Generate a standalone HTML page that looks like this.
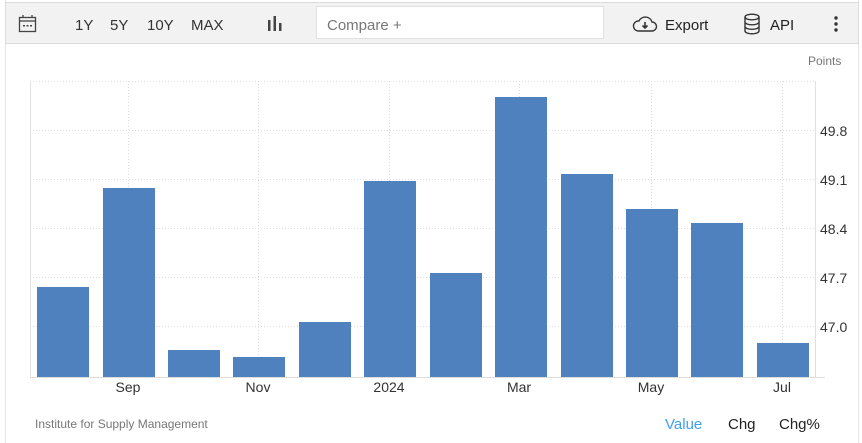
<!DOCTYPE html>
<html><head><meta charset="utf-8"><style>
*{margin:0;padding:0;box-sizing:border-box}
body{width:862px;height:443px;background:#fff;font-family:"Liberation Sans",sans-serif;position:relative;overflow:hidden}
.frame{position:absolute;left:5px;top:0;width:854px;height:443px;border-left:1px solid #e6e6e6;border-right:1px solid #e6e6e6}
.tb{position:absolute;left:5px;top:2px;width:854px;height:42px;background:#f2f2f2;border:1px solid #dcdcdc}
.t{position:absolute;font-size:15px;color:#333;top:17px}
.cmp{position:absolute;left:316px;top:6px;width:288px;height:33px;background:#fff;border:1px solid #e0e0e0;font-size:15px;color:#777;padding:10px 10px}
.lbl{position:absolute;font-size:14px;color:#333}
</style></head><body>
<div class="frame"></div>
<div class="tb"></div>
<svg style="position:absolute;left:18px;top:14px" width="20" height="20" viewBox="0 0 20 20"><rect x="1.5" y="3.5" width="16" height="14" fill="none" stroke="#444" stroke-width="1.3"/><line x1="1.5" y1="7" x2="17.5" y2="7" stroke="#444" stroke-width="1.3"/><line x1="5" y1="1" x2="5" y2="4" stroke="#444" stroke-width="1.3"/><line x1="14" y1="1" x2="14" y2="4" stroke="#444" stroke-width="1.3"/><rect x="5" y="11" width="2" height="1.5" fill="#444"/><rect x="8.5" y="11" width="2" height="1.5" fill="#444"/><rect x="12" y="11" width="2" height="1.5" fill="#444"/></svg>
<div class="t" style="left:75px">1Y</div>
<div class="t" style="left:110px">5Y</div>
<div class="t" style="left:147px">10Y</div>
<div class="t" style="left:191px">MAX</div>
<svg style="position:absolute;left:267px;top:15px" width="16" height="18"><rect x="1" y="5" width="2.5" height="11" fill="#444"/><rect x="6.5" y="1" width="2.5" height="15" fill="#444"/><rect x="12" y="8" width="2.5" height="8" fill="#444"/></svg>
<div class="cmp">Compare +</div>
<svg style="position:absolute;left:632px;top:15px" width="26" height="18" viewBox="0 0 26 18"><path d="M6 16 H20 A4.5 4.5 0 0 0 20 7 A7 7 0 0 0 7 6 A5 5 0 0 0 6 16 Z" fill="none" stroke="#333" stroke-width="1.4"/><path d="M13 7 V13 M10.5 10.5 L13 13 L15.5 10.5" fill="none" stroke="#333" stroke-width="1.6"/></svg>
<div class="t" style="left:665px;color:#222">Export</div>
<svg style="position:absolute;left:743px;top:13px" width="18" height="22" viewBox="0 0 18 22"><ellipse cx="9" cy="4" rx="7" ry="2.8" fill="none" stroke="#333" stroke-width="1.4"/><path d="M2 4 V18 A7 2.8 0 0 0 16 18 V4 M2 9 A7 2.8 0 0 0 16 9 M2 13.5 A7 2.8 0 0 0 16 13.5" fill="none" stroke="#333" stroke-width="1.4"/></svg>
<div class="t" style="left:770px;color:#222">API</div>
<svg style="position:absolute;left:834px;top:16px" width="4" height="16"><circle cx="2" cy="2" r="1.7" fill="#333"/><circle cx="2" cy="8" r="1.7" fill="#333"/><circle cx="2" cy="14" r="1.7" fill="#333"/></svg>
<div class="lbl" style="left:808px;top:54px;font-size:12px;color:#777">Points</div>
<svg style="position:absolute;left:0;top:0" width="862" height="443">
<g stroke="#ddd" stroke-dasharray="1,2" stroke-width="1">
<line x1="30" y1="81.5" x2="815" y2="81.5"/><line x1="30" y1="130.5" x2="815" y2="130.5"/><line x1="30" y1="179.5" x2="815" y2="179.5"/><line x1="30" y1="228.5" x2="815" y2="228.5"/><line x1="30" y1="277.5" x2="815" y2="277.5"/><line x1="30" y1="326.5" x2="815" y2="326.5"/>
<line x1="128.5" y1="81" x2="128.5" y2="377"/><line x1="258.5" y1="81" x2="258.5" y2="377"/><line x1="389.5" y1="81" x2="389.5" y2="377"/><line x1="519.5" y1="81" x2="519.5" y2="377"/><line x1="651.5" y1="81" x2="651.5" y2="377"/><line x1="782.5" y1="81" x2="782.5" y2="377"/>
</g>
<line x1="30.5" y1="81" x2="30.5" y2="377" stroke="#e0e0e0"/>
<line x1="815.5" y1="81" x2="815.5" y2="377" stroke="#e0e0e0"/>
<line x1="30" y1="377.5" x2="825" y2="377.5" stroke="#ddd"/>
<g fill="#4e81bd">
<rect x="37" y="287" width="52" height="90"/><rect x="103" y="188" width="52" height="189"/><rect x="168" y="350" width="52" height="27"/><rect x="233" y="357" width="52" height="20"/><rect x="299" y="322" width="52" height="55"/><rect x="364" y="181" width="52" height="196"/><rect x="430" y="273" width="52" height="104"/><rect x="495" y="97" width="52" height="280"/><rect x="561" y="174" width="52" height="203"/><rect x="626" y="209" width="52" height="168"/><rect x="691" y="223" width="52" height="154"/><rect x="757" y="343" width="52" height="34"/>
</g>
<g font-family="Liberation Sans, sans-serif" font-size="14" fill="#333">
<text x="820" y="136">49.8</text><text x="820" y="185">49.1</text><text x="820" y="234">48.4</text><text x="820" y="283">47.7</text><text x="820" y="332">47.0</text>
<g text-anchor="middle"><text x="128" y="392">Sep</text><text x="258" y="392">Nov</text><text x="389" y="392">2024</text><text x="519" y="392">Mar</text><text x="651" y="392">May</text><text x="782" y="392">Jul</text></g>
</g>
</svg>
<div class="lbl" style="left:35px;top:417px;font-size:12px;color:#777">Institute for Supply Management</div>
<div class="lbl" style="left:665px;top:416px;font-size:15px;color:#3ea0f0">Value</div>
<div class="lbl" style="left:728px;top:416px;font-size:15px;color:#222">Chg</div>
<div class="lbl" style="left:779px;top:416px;font-size:15px;color:#222">Chg%</div>
</body></html>
